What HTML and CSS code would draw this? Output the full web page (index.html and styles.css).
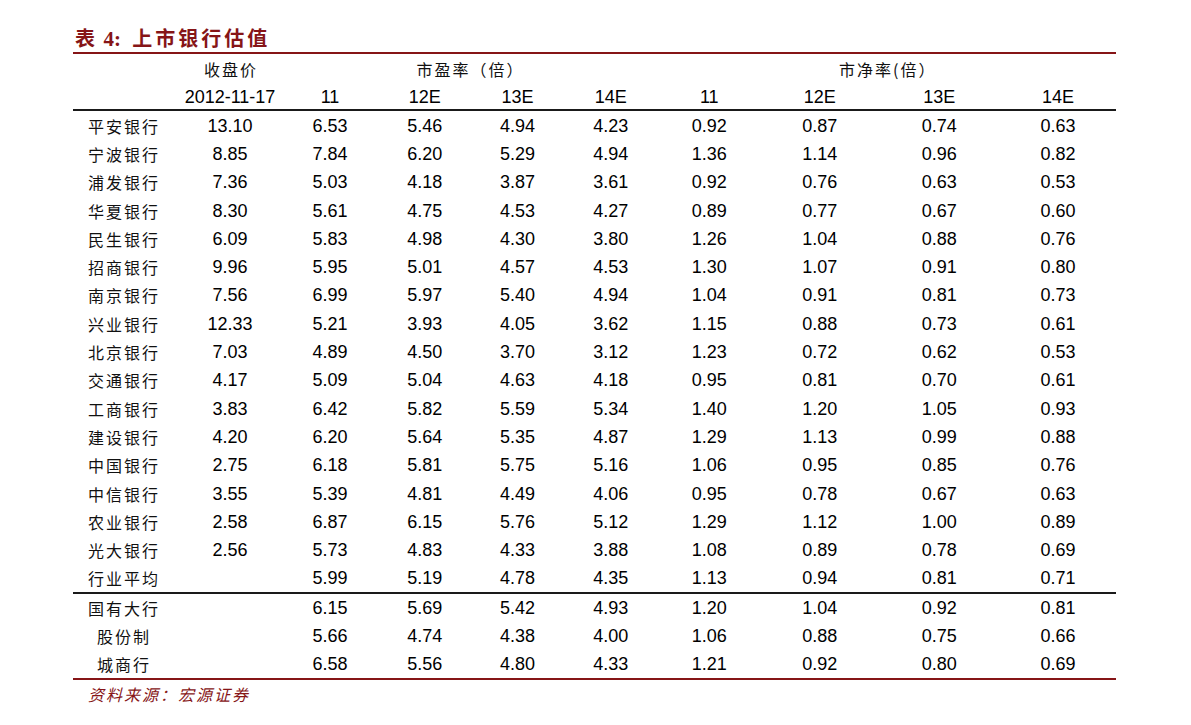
FILE: index.html
```html
<!DOCTYPE html>
<html lang="zh">
<head>
<meta charset="utf-8">
<title>表 4: 上市银行估值</title>
<link rel="stylesheet" href="styles.css">
</head>
<body>
<div class="page">
  <div class="title"><span class="t-cn">表</span> <span class="t-num">4:</span>&nbsp; <span class="t-cn">上市银行估值</span></div>
  <div class="grid head">
    <div class="cn">&nbsp;</div>
    <div class="cn c">收盘价</div>
    <div class="cn c span4">市盈率（倍）</div>
    <div class="cn c span4">市净率(倍）</div>
    <div></div>
    <div class="c">2012-11-17</div>
    <div class="c">11</div><div class="c">12E</div><div class="c">13E</div><div class="c">14E</div>
    <div class="c">11</div><div class="c">12E</div><div class="c">13E</div><div class="c">14E</div>
  </div>
  <div class="grid body" id="main"></div>
  <div class="grid body foot" id="groups"></div>
  <div class="source">资料来源：宏源证券</div>
</div>
<script>
const rows = [
["平安银行","13.10","6.53","5.46","4.94","4.23","0.92","0.87","0.74","0.63"],
["宁波银行","8.85","7.84","6.20","5.29","4.94","1.36","1.14","0.96","0.82"],
["浦发银行","7.36","5.03","4.18","3.87","3.61","0.92","0.76","0.63","0.53"],
["华夏银行","8.30","5.61","4.75","4.53","4.27","0.89","0.77","0.67","0.60"],
["民生银行","6.09","5.83","4.98","4.30","3.80","1.26","1.04","0.88","0.76"],
["招商银行","9.96","5.95","5.01","4.57","4.53","1.30","1.07","0.91","0.80"],
["南京银行","7.56","6.99","5.97","5.40","4.94","1.04","0.91","0.81","0.73"],
["兴业银行","12.33","5.21","3.93","4.05","3.62","1.15","0.88","0.73","0.61"],
["北京银行","7.03","4.89","4.50","3.70","3.12","1.23","0.72","0.62","0.53"],
["交通银行","4.17","5.09","5.04","4.63","4.18","0.95","0.81","0.70","0.61"],
["工商银行","3.83","6.42","5.82","5.59","5.34","1.40","1.20","1.05","0.93"],
["建设银行","4.20","6.20","5.64","5.35","4.87","1.29","1.13","0.99","0.88"],
["中国银行","2.75","6.18","5.81","5.75","5.16","1.06","0.95","0.85","0.76"],
["中信银行","3.55","5.39","4.81","4.49","4.06","0.95","0.78","0.67","0.63"],
["农业银行","2.58","6.87","6.15","5.76","5.12","1.29","1.12","1.00","0.89"],
["光大银行","2.56","5.73","4.83","4.33","3.88","1.08","0.89","0.78","0.69"],
["行业平均","","5.99","5.19","4.78","4.35","1.13","0.94","0.81","0.71"]
];
const groups = [
["国有大行","","6.15","5.69","5.42","4.93","1.20","1.04","0.92","0.81",""],
["股份制","","5.66","4.74","4.38","4.00","1.06","0.88","0.75","0.66","ind"],
["城商行","","6.58","5.56","4.80","4.33","1.21","0.92","0.80","0.69","ind"]
];
function fill(id, data) {
  const el = document.getElementById(id);
  data.forEach(r => {
    for (let i = 0; i < 10; i++) {
      const d = document.createElement("div");
      d.textContent = r[i];
      if (i === 0) { d.className = "cn name" + (r[10] === "ind" ? " ind" : ""); }
      else d.className = "c";
      el.appendChild(d);
    }
  });
}
fill("main", rows);
fill("groups", groups);
</script>
</body>
</html>
```
FILE: styles.css
```css
html, body {
  margin: 0;
  padding: 0;
  background: #ffffff;
}
body {
  font-family: "Liberation Sans", Arial, sans-serif;
  color: #000;
  font-size: 18px;
}
.page {
  margin-left: 73px;
  width: 1043px;
  padding-top: 24px;
}
.title {
  height: 28px;
  line-height: 28px;
  border-bottom: 2px solid #861517;
  padding-left: 2px;
  color: #861517;
  font-weight: bold;
  font-size: 20px;
  white-space: pre;
}
.t-cn {
  font-family: "Noto Sans CJK SC", sans-serif;
  letter-spacing: 3px;
}
.t-num {
  font-family: "Liberation Serif", serif;
  font-size: 21px;
}
.grid {
  display: grid;
  grid-template-columns: 105.5px 103px 97px 92.5px 93px 93.5px 103.5px 117.5px 121.5px 116px;
  align-items: center;
}
.head {
  grid-template-rows: 29px 26px;
  border-bottom: 2px solid #1a1a1a;
}
.body {
  grid-auto-rows: 28.3px;
}
.foot {
  border-top: 2px solid #1a1a1a;
  border-bottom: 2px solid #861517;
  grid-auto-rows: 27.9px;
}
.c {
  text-align: center;
  line-height: 1;
  padding-top: 1px;
}
.cn {
  font-family: "Noto Sans CJK SC", sans-serif;
  font-size: 16px;
  letter-spacing: 2px;
  font-weight: 400;
  color: #111;
}
.c.cn {
  padding-left: 2px;
}
.name {
  padding-left: 15px;
  line-height: 1;
  padding-top: 1px;
}
.ind {
  padding-left: 24px;
}
.span4 {
  grid-column: span 4;
}
.source {
  font-family: "Noto Sans CJK SC", sans-serif;
  font-style: italic;
  font-size: 16px;
  letter-spacing: 2px;
  color: #861517;
  padding-left: 15px;
  padding-top: 3px;
  line-height: 22px;
}
```
